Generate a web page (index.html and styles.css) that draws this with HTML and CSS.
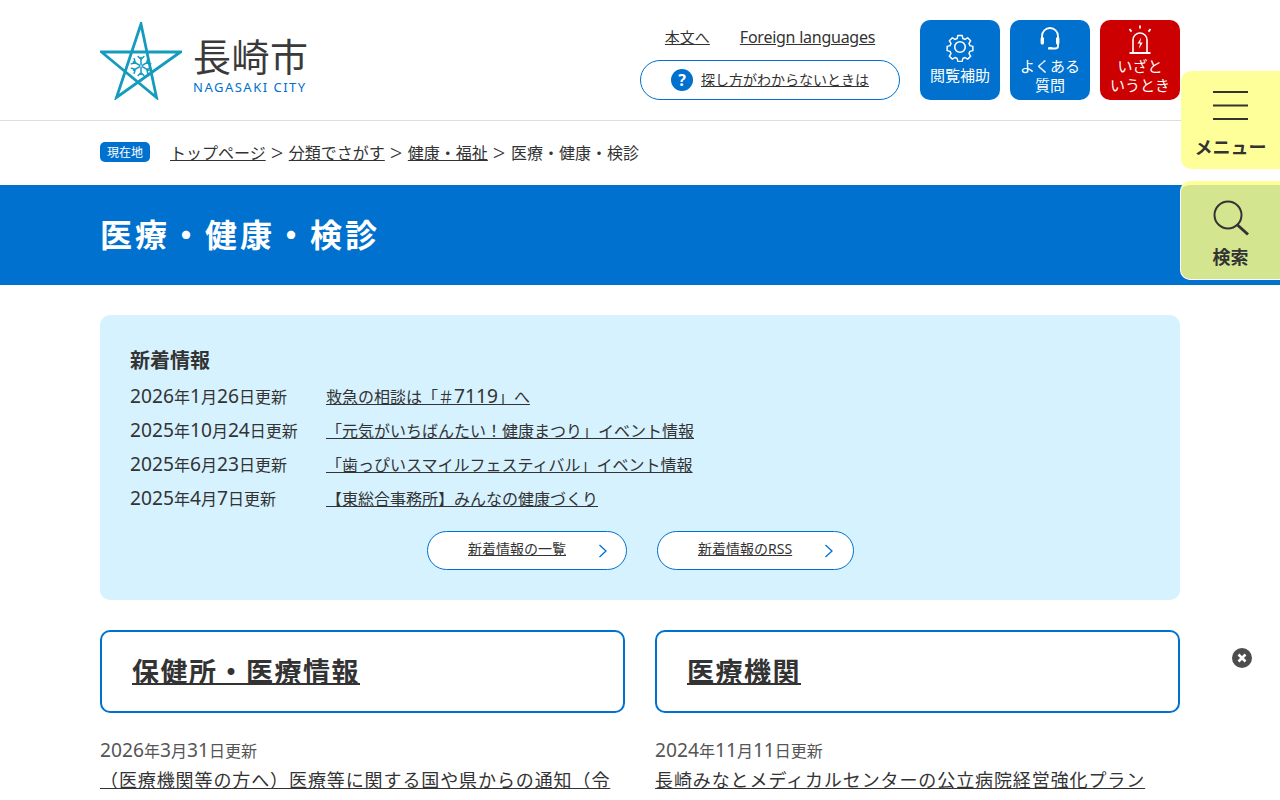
FILE: index.html
```html
<!DOCTYPE html>
<html lang="ja">
<head>
<meta charset="utf-8">
<title>医療・健康・検診 | 長崎市</title>
<link rel="stylesheet" href="styles.css">
</head>
<body>
<header class="site-header">
  <div class="wrap header-inner">
    <a class="logo" href="#">
      <svg class="logo-star" width="82" height="78" viewBox="0 0 82 78">
        <polygon points="41,2 56.500,75.500 1.500,30 80.500,30 16.500,75.500" fill="none" stroke="#149bbd" stroke-width="2.800" stroke-linejoin="miter"/>
        <g stroke="#149bbd" stroke-width="1.600" stroke-linecap="round" fill="none" transform="translate(41,44) scale(.95)">
          <path d="M0-1.500V-9M-3-10l3 3 3-3"/>
          <path transform="rotate(60)" d="M0-1.500V-9M-3-10l3 3 3-3"/>
          <path transform="rotate(120)" d="M0-1.500V-9M-3-10l3 3 3-3"/>
          <path transform="rotate(180)" d="M0-1.500V-9M-3-10l3 3 3-3"/>
          <path transform="rotate(240)" d="M0-1.500V-9M-3-10l3 3 3-3"/>
          <path transform="rotate(300)" d="M0-1.500V-9M-3-10l3 3 3-3"/>
        </g>
      </svg>
      <span class="logo-text">
        <span class="logo-ja">長崎市</span>
        <span class="logo-en">NAGASAKI CITY</span>
      </span>
    </a>
    <div class="header-links">
      <div class="text-links">
        <a class="link-ja" href="#">本文へ</a>
        <a class="link-en" href="#">Foreign languages</a>
      </div>
      <a class="help-pill" href="#">
        <span class="help-icon">?</span>
        <span class="help-label">探し方がわからないときは</span>
      </a>
    </div>
    <nav class="tiles">
      <a class="tile" href="#">
        <svg width="30" height="30" viewBox="0 0 30 30" fill="none" stroke="#fff" stroke-width="1.600" stroke-linejoin="round">
          <path d="M12.600 2.500h4.800l.8 3.400 2.300 1 3-1.800 3.300 3.400-1.800 2.900 1 2.400 3.300.8v4.800l-3.300.8-1 2.400 1.800 2.900-3.300 3.300-3-1.800-2.300 1-.8 3.400h-4.800l-.8-3.400-2.300-1-3 1.800-3.300-3.300 1.800-2.900-1-2.400-3.300-.8v-4.800l3.300-.8 1-2.400-1.800-2.900 3.300-3.400 3 1.800 2.300-1z" transform="translate(1.500 1.200) scale(.9)"/>
          <circle cx="15" cy="15" r="5.300"/>
        </svg>
        <span>閲覧補助</span>
      </a>
      <a class="tile tile-two" href="#">
        <svg width="24" height="26" viewBox="0 0 24 26" fill="none" stroke="#fff" stroke-width="1.800">
          <path d="M4 13V10a8 8 0 0 1 16 0v3"/>
          <rect x="2.600" y="11" width="3.400" height="7.500" rx="1.500" fill="#fff" stroke="none"/>
          <rect x="18" y="11" width="3.400" height="7.500" rx="1.500" fill="#fff" stroke="none"/>
          <path d="M20 18v2.500q0 2-3 2h-3"/>
          <rect x="10" y="21" width="4.500" height="2.600" rx="1.200" fill="#fff" stroke="none"/>
        </svg>
        <span>よくある<br>質問</span>
      </a>
      <a class="tile tile-two tile-red" href="#">
        <svg width="26" height="30" viewBox="0 0 26 30" fill="none" stroke="#fff" stroke-width="1.600">
          <path d="M13 0.500v3M2.500 4l2 2.600M23.500 4l-2 2.600" stroke-width="1.800"/>
          <path d="M6 27V15a7 7 0 0 1 14 0V27"/>
          <path d="M2.500 28h21" stroke-width="2"/>
          <path d="M14.300 12.500l-3.800 6h2.600L11.800 24l3.900-6.500h-2.600z" fill="#fff" stroke="none"/>
        </svg>
        <span>いざと<br>いうとき</span>
      </a>
    </nav>
  </div>
</header>

<div class="crumbs">
  <div class="wrap crumbs-inner">
    <span class="here">現在地</span>
    <a href="#">トップページ</a><span class="sep">&gt;</span><a href="#">分類でさがす</a><span class="sep">&gt;</span><a href="#">健康・福祉</a><span class="sep">&gt;</span><span>医療・健康・検診</span>
  </div>
</div>

<div class="title-band">
  <h1 class="wrap">医療・健康・検診</h1>
</div>

<main class="wrap">
  <section class="news">
    <h2>新着情報</h2>
    <ul class="news-list">
      <li><span class="date"><span class="n">2026</span>年<span class="n">1</span>月<span class="n">26</span>日更新</span><a href="#">救急の相談は「＃<span class="n">7119</span>」へ</a></li>
      <li><span class="date"><span class="n">2025</span>年<span class="n">10</span>月<span class="n">24</span>日更新</span><a href="#">「元気がいちばんたい！健康まつり」イベント情報</a></li>
      <li><span class="date"><span class="n">2025</span>年<span class="n">6</span>月<span class="n">23</span>日更新</span><a href="#">「歯っぴいスマイルフェスティバル」イベント情報</a></li>
      <li><span class="date"><span class="n">2025</span>年<span class="n">4</span>月<span class="n">7</span>日更新</span><a href="#">【東総合事務所】みんなの健康づくり</a></li>
    </ul>
    <div class="news-btns">
      <a class="pill pill-list" href="#"><span>新着情報の一覧</span><svg width="10" height="14" viewBox="0 0 10 14" fill="none" stroke="#0071ce" stroke-width="1.300"><path d="M1.500 1l6.500 6-6.500 6"/></svg></a>
      <a class="pill pill-rss" href="#"><span>新着情報のRSS</span><svg width="10" height="14" viewBox="0 0 10 14" fill="none" stroke="#0071ce" stroke-width="1.300"><path d="M1.500 1l6.500 6-6.500 6"/></svg></a>
    </div>
  </section>

  <div class="columns">
    <section class="col">
      <h2 class="col-head"><a href="#">保健所・医療情報</a></h2>
      <p class="col-date"><span class="n">2026</span>年<span class="n">3</span>月<span class="n">31</span>日更新</p>
      <p class="col-link"><a href="#">（医療機関等の方へ）医療等に関する国や県からの通知（令</a></p>
    </section>
    <section class="col">
      <h2 class="col-head"><a href="#">医療機関</a></h2>
      <p class="col-date"><span class="n">2024</span>年<span class="n">11</span>月<span class="n">11</span>日更新</p>
      <p class="col-link"><a href="#">長崎みなとメディカルセンターの公立病院経営強化プラン</a></p>
    </section>
  </div>
</main>

<aside class="side">
  <a class="side-btn side-menu" href="#">
    <svg width="36" height="30" viewBox="0 0 36 30" stroke="#333" stroke-width="2"><path d="M0 1h35M0 14.500h35M0 28h35"/></svg>
    <span>メニュー</span>
  </a>
  <a class="side-btn side-search" href="#">
    <svg width="37" height="37" viewBox="0 0 37 37" fill="none" stroke="#333" stroke-width="2"><circle cx="15" cy="15" r="13.500"/><path d="M24.500 25l10.500 9.500" stroke-width="3"/></svg>
    <span>検索</span>
  </a>
</aside>

<a class="close-btn" href="#" aria-label="閉じる">
  <svg width="20" height="20" viewBox="0 0 20 20"><circle cx="10" cy="10" r="10" fill="#4d4d4d"/><path d="M6.500 6.500l7 7M13.500 6.500l-7 7" stroke="#fff" stroke-width="2.600"/></svg>
</a>
</body>
</html>
```

FILE: styles.css
```css
* { box-sizing: border-box; }
html, body { margin: 0; padding: 0; }
body {
  height: 800px;
  overflow: hidden;
  position: relative;
  background: #fff;
  color: #333;
  font-family: "Noto Sans", "Noto Sans CJK JP", sans-serif;
  font-size: 16px;
}
a { color: #333; }
h1, h2, p, ul { margin: 0; padding: 0; }
ul { list-style: none; }
.wrap { width: 1080px; margin: 0 auto; }
.n { font-size: 1.2em; line-height: 1; }

.site-header { height: 121px; border-bottom: 1px solid #ddd; }
.header-inner { display: flex; height: 120px; align-items: flex-start; }
.logo { display: flex; text-decoration: none; padding-top: 22px; width: 540px; }
.logo-star { flex: none; }
.logo-text { display: flex; flex-direction: column; margin-left: 11px; padding-top: 11px; }
.logo-ja { font-size: 38px; line-height: 46px; letter-spacing: .5px; font-weight: 400; color: #3a3a3a; }
.logo-en { font-size: 13px; line-height: 16px; letter-spacing: 1.500px; color: #0071ce; }

.header-links { width: 260px; display: flex; flex-direction: column; align-items: center; }
.text-links { display: flex; align-items: center; gap: 30px; margin-top: 25px; height: 24px; line-height: 24px; }
.link-ja { font-size: 15px; }
.link-en { font-size: 16px; letter-spacing: -.25px; }
.help-pill {
  display: flex; align-items: center; justify-content: center;
  width: 260px; height: 40px; margin-top: 11px;
  border: 1px solid #0071ce; border-radius: 20px; text-decoration: none;
}
.help-icon {
  width: 22px; height: 22px; border-radius: 50%;
  background: #0071ce; color: #fff; font-weight: 700; font-size: 16px;
  display: flex; align-items: center; justify-content: center; margin-right: 8px;
}
.help-label { font-size: 14px; line-height: 20px; text-decoration: underline; margin-top: -1px; }

.tiles { display: flex; gap: 10px; margin-left: 20px; padding-top: 20px; }
.tile {
  width: 80px; height: 80px; border-radius: 10px; background: #0071ce;
  color: #fff; text-decoration: none; text-align: center;
  font-size: 15px; line-height: 19px;
  display: flex; flex-direction: column; align-items: center; padding-top: 12px;
}
.tile svg { display: block; margin-bottom: 4px; }
.tile-two { padding-top: 6px; }
.tile-two svg { margin-bottom: 5px; }
.tile-red { background: #cc0000; padding-top: 5px; }
.tile-red svg { margin-bottom: 2px; }

.crumbs { height: 64px; }
.crumbs-inner { display: flex; align-items: center; height: 62px; font-size: 16px; }
.here {
  width: 50px; height: 20px; margin-right: 20px; border-radius: 5px;
  background: #0071ce; color: #fff; font-size: 12px; line-height: 21px; text-align: center;
}
.sep { margin: 0 5.500px 0 5px; font-size: 22px; line-height: 24px; font-weight: 300; }

.title-band { height: 100px; background: #0071ce; }
.title-band h1 { color: #fff; font-size: 32px; letter-spacing: 3px; font-weight: 700; line-height: 100px; }

.news {
  margin-top: 30px; height: 285px; padding: 30px 30px 0;
  background: #d6f2ff; border-radius: 10px;
}
.news h2 { font-size: 20px; font-weight: 700; line-height: 32px; }
.news-list { margin-top: 3px; }
.news-list li { display: flex; height: 34px; align-items: center; line-height: 34px; }
.date { width: 196px; }
.news-btns { display: flex; justify-content: center; gap: 30px; margin-top: 15px; padding-left: 1px; }
.pill {
  height: 39px; display: flex; align-items: center;
  background: #fff; border: 1px solid #0071ce; border-radius: 20px;
  font-size: 14px;
}
.pill span { text-decoration: underline; line-height: 20px; margin-top: -3px; }
.pill svg { margin-left: auto; }
.pill-list { width: 200px; padding: 0 18px 0 40px; }
.pill-rss { width: 197px; padding: 0 19px 0 40px; }

.columns { display: flex; gap: 30px; margin-top: 30px; }
.col { width: 525px; }
.col-head {
  height: 83px; border: 2px solid #0071ce; border-radius: 10px;
  padding-left: 30px; font-size: 27px; letter-spacing: 1.500px; font-weight: 700; line-height: 79px;
}
.col-head a { text-decoration-thickness: 2px; }
.col-date { margin-top: 26px; font-size: 16px; line-height: 24px; color: #555; }
.col-link { font-size: 18px; letter-spacing: .9px; line-height: 28px; margin-top: 3px; white-space: nowrap; }

.side { position: absolute; top: 71px; right: 0; width: 100px; }
.side-btn {
  display: flex; flex-direction: column; align-items: center;
  border-radius: 10px 0 0 10px; text-decoration: none;
  font-weight: 700; font-size: 18px; color: #333;
}
.side-menu { width: 99px; margin-left: 1px; height: 98px; background: #ffff99; padding-top: 20px; }
.side-menu svg { margin-bottom: 13px; margin-left: 1px; }
.side-menu span { line-height: 26px; }
.side-search {
  width: 100px; height: 99px; margin-top: 12px; background: #d4e590;
  border: 1px solid #fff; border-top: 4px solid #ffff99; border-right: 0;
  padding-top: 15px; padding-left: 2px;
}
.side-search svg { margin-bottom: 7px; }
.side-search span { line-height: 26px; margin-left: -2px; }

.close-btn { position: absolute; left: 1232px; top: 648px; display: block; width: 20px; height: 20px; }
.close-btn svg { display: block; }
```
